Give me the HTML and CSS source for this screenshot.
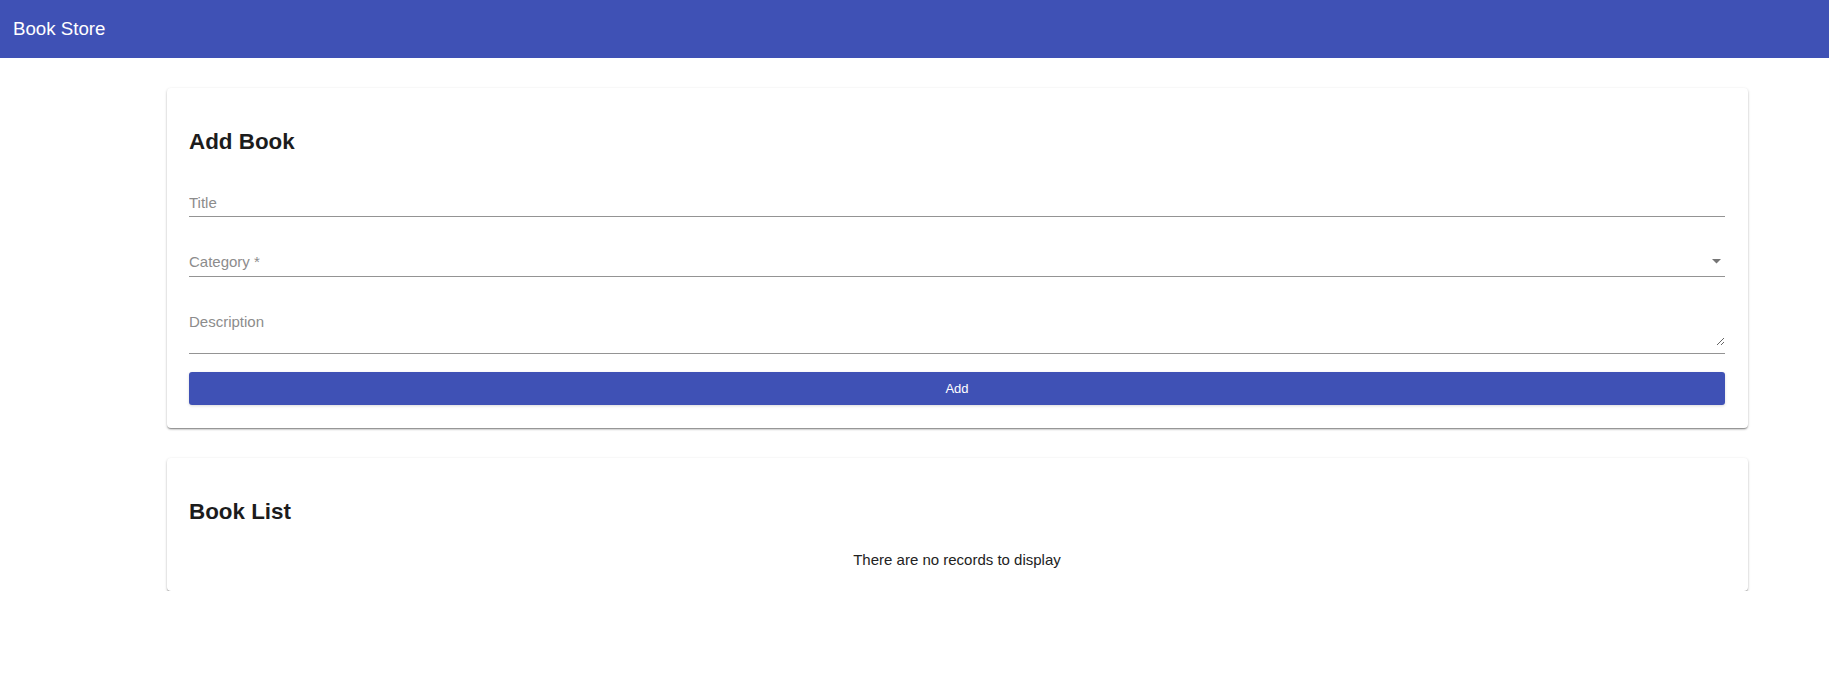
FILE: index.html
```html
<!DOCTYPE html>
<html>
<head>
	<meta charset=utf-8>
	<title>Book Store</title>
	<link rel="stylesheet" href="styles.css">
</head>
<body>
<header class=appbar>
	<h1 class=appbar-title>Book Store</h1>
</header>
<main class=content>
	<section class=card>
		<h2 class=card-title>Add Book</h2>
		<form id=add-book onsubmit="return false;">
			<div class="field field-title">
				<input name=title placeholder="Title">
			</div>
			<div class="field field-select">
				<span class=select-label>Category *</span>
				<svg class=select-arrow width="9" height="5" viewBox="0 0 9 5"><path d="M0 0h9L4.5 4.5z" fill="#757575"/></svg>
			</div>
			<div class="field field-multiline">
				<textarea name=description placeholder="Description"></textarea>
			</div>
			<button type=submit class=btn-add>Add</button>
		</form>
	</section>
	<section class=card>
		<h2 class=card-title>Book List</h2>
		<p class=empty>There are no records to display</p>
	</section>
</main>
</body>
</html>
```
FILE: styles.css
```css
* {
	margin: 0;
	padding: 0;
	box-sizing: border-box;
}
body {
	font-family: "Liberation Sans", Arial, sans-serif;
	color: #212121;
	background: #fff;
}
.appbar {
	height: 58px;
	display: flex;
	align-items: center;
	padding-left: 13px;
	background: #3f51b5;
	color: #fff;
}
.appbar-title {
	font-size: 18.7px;
	font-weight: normal;
	line-height: 22px;
}
.content {
	display: flex;
	flex-direction: column;
	gap: 30px;
	padding: 30px 81px 0 167px;
}
.card {
	background: #fff;
	border-radius: 4px;
	padding: 41px 23px 23px 22px;
	box-shadow: 0 1px 3px rgba(0,0,0,.2), 0 1px 1px rgba(0,0,0,.14), 0 2px 2px -1px rgba(0,0,0,.3);
}
.card-title {
	font-size: 22.4px;
	font-weight: bold;
	line-height: 26px;
	color: #1c1c1c;
}
.field {
	border-bottom: 1px solid #949494;
	font-size: 15px;
	line-height: 18px;
	color: #8c8c8c;
}
.field input,
.field textarea {
	display: block;
	width: 100%;
	border: none;
	outline: none;
	font: inherit;
	line-height: 18px;
	color: #212121;
	background: transparent;
}
.field input::placeholder,
.field textarea::placeholder {
	color: #8c8c8c;
	opacity: 1;
}
.field-title {
	margin-top: 38px;
}
.field-title input {
	height: 23px;
	padding-bottom: 5px;
}
.field-select {
	margin-top: 36px;
	display: flex;
	align-items: flex-start;
	justify-content: space-between;
	padding-bottom: 5px;
}
.select-arrow {
	margin: 6px 4px 0 0;
}
.field-multiline {
	margin-top: 36px;
	padding-bottom: 7px;
}
.field-multiline textarea {
	height: 33px;
	resize: vertical;
}
.btn-add {
	display: block;
	width: 100%;
	height: 33px;
	margin-top: 18px;
	border: none;
	border-radius: 3px;
	background: #3f51b5;
	color: #fff;
	font-family: inherit;
	font-size: 13px;
	box-shadow: 0 1px 3px rgba(0,0,0,.15);
}
.empty {
	margin-top: 26px;
	margin-bottom: -1px;
	text-align: center;
	font-size: 15px;
	line-height: 18px;
	color: #222;
}
```
